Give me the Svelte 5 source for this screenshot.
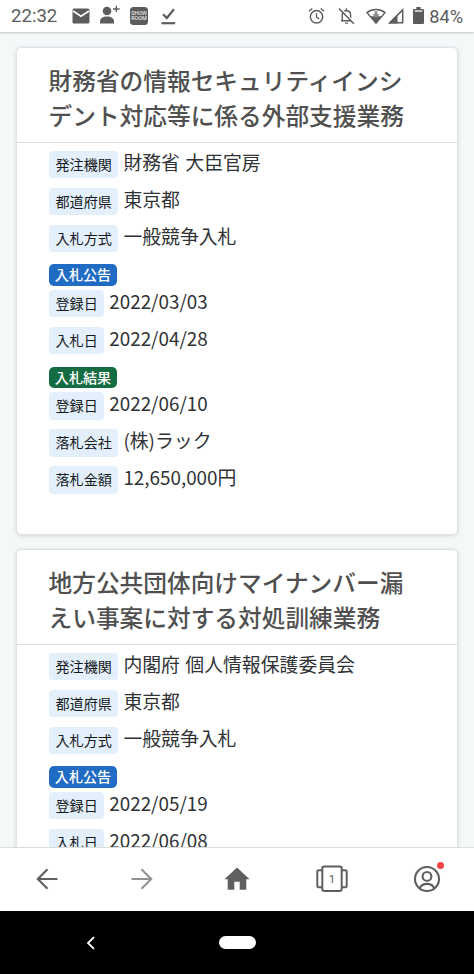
<script lang="ts">
  interface Row {
    label: string;
    value: string;
  }

  interface Section {
    badge: string;
    kind: 'notice' | 'result' | '';
    rows: Row[];
  }

  interface Bid {
    title: string[];
    sections: Section[];
  }

  const bids: Bid[] = [
    {
      title: ['財務省の情報セキュリティインシ', 'デント対応等に係る外部支援業務'],
      sections: [
        {
          badge: '',
          kind: '',
          rows: [
            { label: '発注機関', value: '財務省 大臣官房' },
            { label: '都道府県', value: '東京都' },
            { label: '入札方式', value: '一般競争入札' },
          ],
        },
        {
          badge: '入札公告',
          kind: 'notice',
          rows: [
            { label: '登録日', value: '2022/03/03' },
            { label: '入札日', value: '2022/04/28' },
          ],
        },
        {
          badge: '入札結果',
          kind: 'result',
          rows: [
            { label: '登録日', value: '2022/06/10' },
            { label: '落札会社', value: '(株)ラック' },
            { label: '落札金額', value: '12,650,000円' },
          ],
        },
      ],
    },
    {
      title: ['地方公共団体向けマイナンバー漏', 'えい事案に対する対処訓練業務'],
      sections: [
        {
          badge: '',
          kind: '',
          rows: [
            { label: '発注機関', value: '内閣府 個人情報保護委員会' },
            { label: '都道府県', value: '東京都' },
            { label: '入札方式', value: '一般競争入札' },
          ],
        },
        {
          badge: '入札公告',
          kind: 'notice',
          rows: [
            { label: '登録日', value: '2022/05/19' },
            { label: '入札日', value: '2022/06/08' },
          ],
        },
      ],
    },
  ];
</script>

<div class="screen">
  <header class="status">
    <span class="clock">22:32</span>
    <svg class="mail" width="18" height="16" viewBox="0 0 18 16">
      <rect x="0.5" y="0.5" width="17" height="15" rx="1.5" fill="#5c5c5c" />
      <path d="M1 3l8 5.2L17 3" fill="none" stroke="#fff" stroke-width="1.6" />
    </svg>
    <svg class="person" width="20" height="19" viewBox="0 0 20 19">
      <circle cx="7" cy="6" r="4.3" fill="#5c5c5c" />
      <path d="M0 18.5v-2.2c0-3 3-4.8 7-4.8s7 1.8 7 4.8v2.2z" fill="#5c5c5c" />
      <path d="M16.3.7v6.6M13 4h6.6" stroke="#5c5c5c" stroke-width="1.3" />
    </svg>
    <span class="showroom"><span>SHOW</span><span>ROOM</span></span>
    <svg class="check" width="15" height="17" viewBox="0 0 15 17">
      <path d="M2 6.2l3.8 3.8L13 1.2" fill="none" stroke="#5c5c5c" stroke-width="2.2" />
      <path d="M.5 15.2h13.6" stroke="#5c5c5c" stroke-width="2.2" />
    </svg>

    <div class="right">
      <svg width="17" height="18" viewBox="0 0 17 18">
        <circle cx="8.5" cy="9.8" r="6.2" fill="none" stroke="#5c5c5c" stroke-width="1.5" />
        <path d="M8.5 6.2v4l2.7 1.7M1 4.3l3.3-2.8M16 4.3l-3.3-2.8" fill="none" stroke="#5c5c5c" stroke-width="1.3" />
      </svg>
      <svg class="bell" width="17" height="18" viewBox="0 0 17 18">
        <path d="M3 13.8h11M4.2 13.5V8c0-2.7 1.7-4.3 4.2-4.3s4.2 1.6 4.2 4.3v5.5M8.4 3.5V1.3" fill="none" stroke="#5c5c5c" stroke-width="1.4" />
        <path d="M7 15.5h3v1.2H7z" fill="#5c5c5c" />
        <path d="M2.3 1.5l14.2 15" stroke="#fff" stroke-width="2" />
        <path d="M1 1.5l14.8 15.3" stroke="#5c5c5c" stroke-width="1.5" />
      </svg>
      <svg class="wifi" width="20" height="17" viewBox="0 0 20 17">
        <path d="M1 4.6C6 .4 14 .4 19 4.6L10 15.2z" fill="none" stroke="#5c5c5c" stroke-width="1.4" />
        <path d="M4.4 8.2h11.2L10 15.2z" fill="#5c5c5c" />
        <path d="M8.6 3.2h2.8v3h2.2L10 10.2 6.4 6.2h2.2z" fill="#8b8b8b" />
      </svg>
      <svg class="signal" width="16" height="16" viewBox="0 0 16 16">
        <path d="M1.8 14.8L14.7 1.9v12.9z" fill="none" stroke="#5c5c5c" stroke-width="1.5" />
        <path d="M.5 15.5L9.5 6.5v9z" fill="#5c5c5c" />
      </svg>
      <svg class="battery" width="11" height="18" viewBox="0 0 11 18">
        <path d="M3.3 0h4.4v2H10q1 0 1 1v13q0 1-1 1H1q-1 0-1-1V3q0-1 1-1h2.3z" fill="#5c5c5c" />
        <path d="M1.7 3.2h7.6v1.7H1.7z" fill="#d8d8d8" />
      </svg>
      <span class="percent">84%</span>
    </div>
  </header>

  <main>
    {#each bids as bid}
      <article class="card">
        <h2>
          {#each bid.title as line}
            <span>{line}</span>
          {/each}
        </h2>
        <div class="card-body">
          {#each bid.sections as section}
            <section>
              {#if section.badge}
                <span class="badge {section.kind}">{section.badge}</span>
              {/if}
              <div class="rows">
                {#each section.rows as row}
                  <div class="row">
                    <span class="label">{row.label}</span>
                    <span class="value">{row.value}</span>
                  </div>
                {/each}
              </div>
            </section>
          {/each}
        </div>
      </article>
    {/each}
  </main>

  <nav class="toolbar">
    <button aria-label="back">
      <svg width="24" height="24" viewBox="0 0 24 24">
        <path d="M22.5 12H3M12.5 2.3L2.8 12l9.7 9.7" fill="none" stroke="#5f5f5f" stroke-width="2.1" />
      </svg>
    </button>
    <button aria-label="forward">
      <svg width="24" height="24" viewBox="0 0 24 24">
        <path d="M1.5 12H21M11.5 2.3l9.7 9.7-9.7 9.7" fill="none" stroke="#929292" stroke-width="2.1" />
      </svg>
    </button>
    <button aria-label="home">
      <svg width="26" height="24" viewBox="0 0 26 24">
        <path d="M13 .5L.4 12.2h3.3v10.6h6.6v-8h5.4v8h6.6V12.2h3.3z" fill="#5f5f5f" />
      </svg>
    </button>
    <button aria-label="tabs">
      <svg width="32" height="28" viewBox="0 0 32 28">
        <rect x="6.3" y="1.6" width="19.4" height="24.3" rx="1.8" fill="none" stroke="#5f5f5f" stroke-width="2" />
        <path d="M6 5.3H2.6q-1.3 0-1.3 1.3v14.3q0 1.3 1.3 1.3H6M26 5.3h3.4q1.3 0 1.3 1.3v14.3q0 1.3-1.3 1.3H26" fill="none" stroke="#5f5f5f" stroke-width="2" />
        <text x="16" y="18" text-anchor="middle">1</text>
      </svg>
    </button>
    <button class="account" aria-label="account">
      <svg width="28" height="28" viewBox="0 0 28 28">
        <circle cx="14" cy="14" r="12" fill="none" stroke="#5f5f5f" stroke-width="2.1" />
        <circle cx="14" cy="11.4" r="4.4" fill="none" stroke="#5f5f5f" stroke-width="2.1" />
        <path d="M6.8 23.3c1.3-3.2 4-4.4 7.2-4.4s5.9 1.2 7.2 4.4" fill="none" stroke="#5f5f5f" stroke-width="2.1" />
      </svg>
      <i class="dot"></i>
    </button>
  </nav>

  <footer class="system">
    <svg width="10" height="14" viewBox="0 0 10 14">
      <path d="M8 1.2L2 7l6 5.8" fill="none" stroke="#fff" stroke-width="1.8" />
    </svg>
    <span class="pill"></span>
    <span></span>
  </footer>
</div>

<style>
  :global(body) {
    margin: 0;
    background: #f4f8f9;
  }

  .screen {
    display: flex;
    flex-direction: column;
    width: 474px;
    height: 974px;
    overflow: hidden;
    font-family: 'Noto Sans CJK JP', sans-serif;
    background: #f4f8f9;
  }

  .screen svg {
    display: block;
    flex: none;
  }

  .status {
    display: flex;
    align-items: center;
    flex: none;
    box-sizing: border-box;
    height: 32px;
    padding: 0 11px 0 11px;
    color: #5c5c5c;
    font-family: Roboto, sans-serif;
    font-size: 18.6px;
    background: #fff;
    box-shadow: 0 1px 2px rgba(0, 0, 0, 0.22);
    z-index: 1;
  }
  .clock {
    width: 61px;
  }
  .person {
    margin: -3px 0 0 10px;
  }
  .showroom {
    display: flex;
    flex-direction: column;
    align-items: center;
    justify-content: center;
    width: 18px;
    height: 18px;
    margin-left: 10px;
    border-radius: 3.5px;
    background: #5c5c5c;
    color: #fff;
    font-size: 5.4px;
    line-height: 5.5px;
  }
  .check {
    margin-left: 13px;
  }
  .right {
    display: flex;
    align-items: center;
    margin-left: auto;
  }
  .bell {
    margin-left: 13px;
  }
  .wifi {
    margin-left: 11px;
  }
  .signal {
    margin-left: 2px;
  }
  .battery {
    margin: 0 5px 0 9px;
  }
  .percent {
    font-size: 18.2px;
  }

  main {
    display: flex;
    flex-direction: column;
    flex: 1;
    gap: 14px;
    min-height: 0;
    padding: 15px 16px 0;
    overflow: hidden;
  }

  .card {
    flex: none;
    box-sizing: border-box;
    height: 488px;
    border: 1px solid #dfe3e5;
    border-radius: 5px;
    background: #fff;
    box-shadow: 0 1px 4px rgba(0, 0, 0, 0.14);
  }
  h2 {
    display: flex;
    flex-direction: column;
    box-sizing: border-box;
    height: 94.5px;
    margin: 0;
    padding: 14.5px 0 0 31.5px;
    border-bottom: 1.5px solid #dfe0e1;
    color: #505050;
    font-size: 23.7px;
    font-weight: 500;
    line-height: 35.4px;
    white-space: nowrap;
  }
  .card-body {
    display: flex;
    flex-direction: column;
    gap: 12.2px;
    padding: 8.3px 0 0 32px;
  }
  .rows {
    display: flex;
    flex-direction: column;
    gap: 9.8px;
  }
  .row {
    display: flex;
    gap: 5px;
    height: 27.3px;
  }
  .label {
    padding: 0 6.5px;
    border-radius: 4px;
    background: #e3f0fb;
    color: #16191c;
    font-size: 14.1px;
    line-height: 26px;
  }
  .value {
    color: #303235;
    font-size: 18.85px;
    line-height: 21.5px;
    word-spacing: 1.2px;
    white-space: nowrap;
  }
  .badge {
    display: block;
    width: 68px;
    height: 21.6px;
    margin-bottom: 4px;
    border-radius: 5px;
    color: #fff;
    font-size: 14.1px;
    font-weight: 500;
    line-height: 20.5px;
    text-align: center;
  }
  .notice {
    background: #206bc4;
  }
  .result {
    background: #146c43;
  }

  .toolbar {
    display: grid;
    grid-template-columns: repeat(5, 1fr);
    flex: none;
    box-sizing: border-box;
    height: 64px;
    border-top: 1.5px solid #dcdddd;
    background: #fff;
  }
  .toolbar button {
    display: flex;
    align-items: center;
    justify-content: center;
    position: relative;
    padding: 0 0 2px;
    border: 0;
    background: none;
  }
  .toolbar text {
    fill: #5f5f5f;
    font-family: Roboto, sans-serif;
    font-size: 11.5px;
  }
  .dot {
    position: absolute;
    top: 14px;
    right: 30px;
    width: 7px;
    height: 7px;
    border-radius: 50%;
    background: #ee4444;
  }

  .system {
    display: grid;
    grid-template-columns: 182px 110px 182px;
    align-items: center;
    justify-items: center;
    flex: none;
    height: 63px;
    background: #000;
  }
  .pill {
    width: 37px;
    height: 13px;
    border-radius: 7px;
    background: #fff;
  }
</style>
